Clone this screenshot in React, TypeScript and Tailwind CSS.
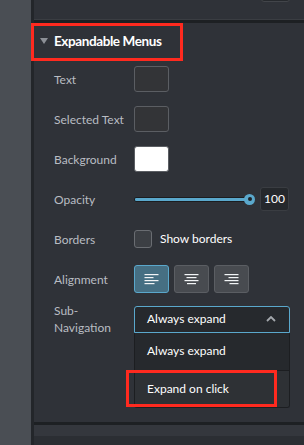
import React from "react";

const font = { fontFamily: "Lato, 'Noto Sans', sans-serif" };

function AlignIcon({ kind }: { kind: "left" | "center" | "right" }) {
  const lens = kind === "left" ? [14, 9, 14, 10] : [14, 10, 14, 9];
  return (
    <svg width="15" height="11" viewBox="0 0 15 11">
      {[0, 1, 2, 3].map((i) => {
        const w = lens[i];
        const x = kind === "left" ? 0.5 : kind === "center" ? (15 - w) / 2 : 14.5 - w;
        return <rect key={i} x={x} y={i * 3} width={w} height={1.2} fill="#f2f4f6" />;
      })}
    </svg>
  );
}

function Row({ label, children }: { label: React.ReactNode; children: React.ReactNode }) {
  return (
    <div className="flex h-[40px] items-center">
      <div className="w-[100px] shrink-0 pl-[20px] text-[12px] leading-[15px] text-[#b9bdc3]">{label}</div>
      <div className="flex items-center">{children}</div>
    </div>
  );
}

function Swatch({ color }: { color: string }) {
  return <div className="h-[26px] w-[35px] rounded-[3px] border border-[#5b5e63]" style={{ background: color }} />;
}

export default function App() {
  return (
    <div className="relative flex h-[445px] w-[304px] overflow-hidden bg-[#2f3238]" style={font}>
      <div className="w-[31px] bg-[#4a4e54]" />
      <div className="w-[3px] bg-[#23262a]" />
      <div className="flex flex-1 flex-col">
        <div className="relative h-[19px] bg-[#2f3238]">
          <div className="absolute left-[227px] top-[-8px] h-[10px] w-[29px] rounded-[3px] border border-[#42454a] bg-[#26292d]" />
        </div>
        <div className="h-[4px] border-t border-[#3a3d42] bg-[#1d2023]" />
        <div className="flex h-[36px] items-center pl-[6px]">
          <svg width="8" height="7" viewBox="0 0 8 7" className="mr-[6px]">
            <path d="M0 0 H8 L4 6 Z" fill="#8c9096" />
          </svg>
          <span className="text-[13.5px] font-bold tracking-[-0.4px] text-white">Expandable Menus</span>
        </div>
        <Row label="Text">
          <Swatch color="#333437" />
        </Row>
        <Row label="Selected Text">
          <Swatch color="#333437" />
        </Row>
        <Row label="Background">
          <Swatch color="#ffffff" />
        </Row>
        <Row label="Opacity">
          <div className="relative h-[5px] w-[121px]">
            <div className="absolute left-0 top-0 h-[5px] w-[116px] rounded-[2px] border border-[#1b1d20] bg-[#5aa8cc]" />
            <div className="absolute left-[110px] top-[-3px] flex h-[11px] w-[11px] items-center justify-center rounded-full bg-[#5aa8cc]">
              <div className="h-[4px] w-[4px] rounded-full bg-[#1f2226]" />
            </div>
          </div>
          <div className="ml-[5px] flex h-[24px] w-[29px] items-center justify-center rounded-[3px] border border-[#3a3d42] bg-[#25282c] text-[12px] text-white">
            100
          </div>
        </Row>
        <Row label="Borders">
          <div className="h-[18px] w-[18px] rounded-[3px] border border-[#6a6d72] bg-[#3c3f44]" />
          <span className="ml-[8px] text-[12px] text-white">Show borders</span>
        </Row>
        <Row label="Alignment">
          <div className="flex gap-[5px]">
            <div className="flex h-[28px] w-[35px] items-center justify-center rounded-[3px] border border-[#5aa8cc] bg-[#466f83]">
              <AlignIcon kind="left" />
            </div>
            <div className="flex h-[28px] w-[35px] items-center justify-center rounded-[3px] border border-[#5b5e63] bg-[#484b50]">
              <AlignIcon kind="center" />
            </div>
            <div className="flex h-[28px] w-[35px] items-center justify-center rounded-[3px] border border-[#5b5e63] bg-[#484b50]">
              <AlignIcon kind="right" />
            </div>
          </div>
        </Row>
        <Row
          label={
            <span className="block leading-[17px]">
              Sub-
              <br />
              Navigation
            </span>
          }
        >
          <div className="relative">
            <div className="flex h-[27px] w-[156px] items-center justify-between rounded-t-[3px] border border-[#5aa8cc] bg-[#26292d] pl-[12px] pr-[13px] text-[12px] text-white">
              <span>Always expand</span>
              <svg width="10" height="6" viewBox="0 0 10 6">
                <path d="M1 5 L5 1 L9 5" stroke="#a4a8ad" strokeWidth="1.8" fill="none" />
              </svg>
            </div>
            <div className="absolute left-0 top-[27px] z-10 w-[156px] overflow-hidden rounded-b-[3px] border border-t-0 border-[#1c1e21]">
              <div className="flex h-[37px] items-center bg-[#26292d] pl-[12px] text-[12px] text-white">Always expand</div>
              <div className="flex h-[37px] items-center border-t border-[#1c1e21] bg-[#2e3135] pl-[12px] text-[12px] text-white">
                Expand on click
              </div>
            </div>
          </div>
        </Row>
        <div className="flex-1" />
        <div className="h-[3px] bg-[#1d2023]" />
        <div className="h-[11px] bg-[#34373d]" />
        <div className="h-[9px] bg-[#2b2e33]" />
      </div>
      <div className="pointer-events-none absolute left-[31px] top-[23px] h-[38px] w-[152px] border-[3px] border-[#ff2a1f]" />
      <div className="pointer-events-none absolute left-[126px] top-[370px] z-20 h-[37px] w-[151px] border-[3px] border-[#ff2a1f]" />
    </div>
  );
}
